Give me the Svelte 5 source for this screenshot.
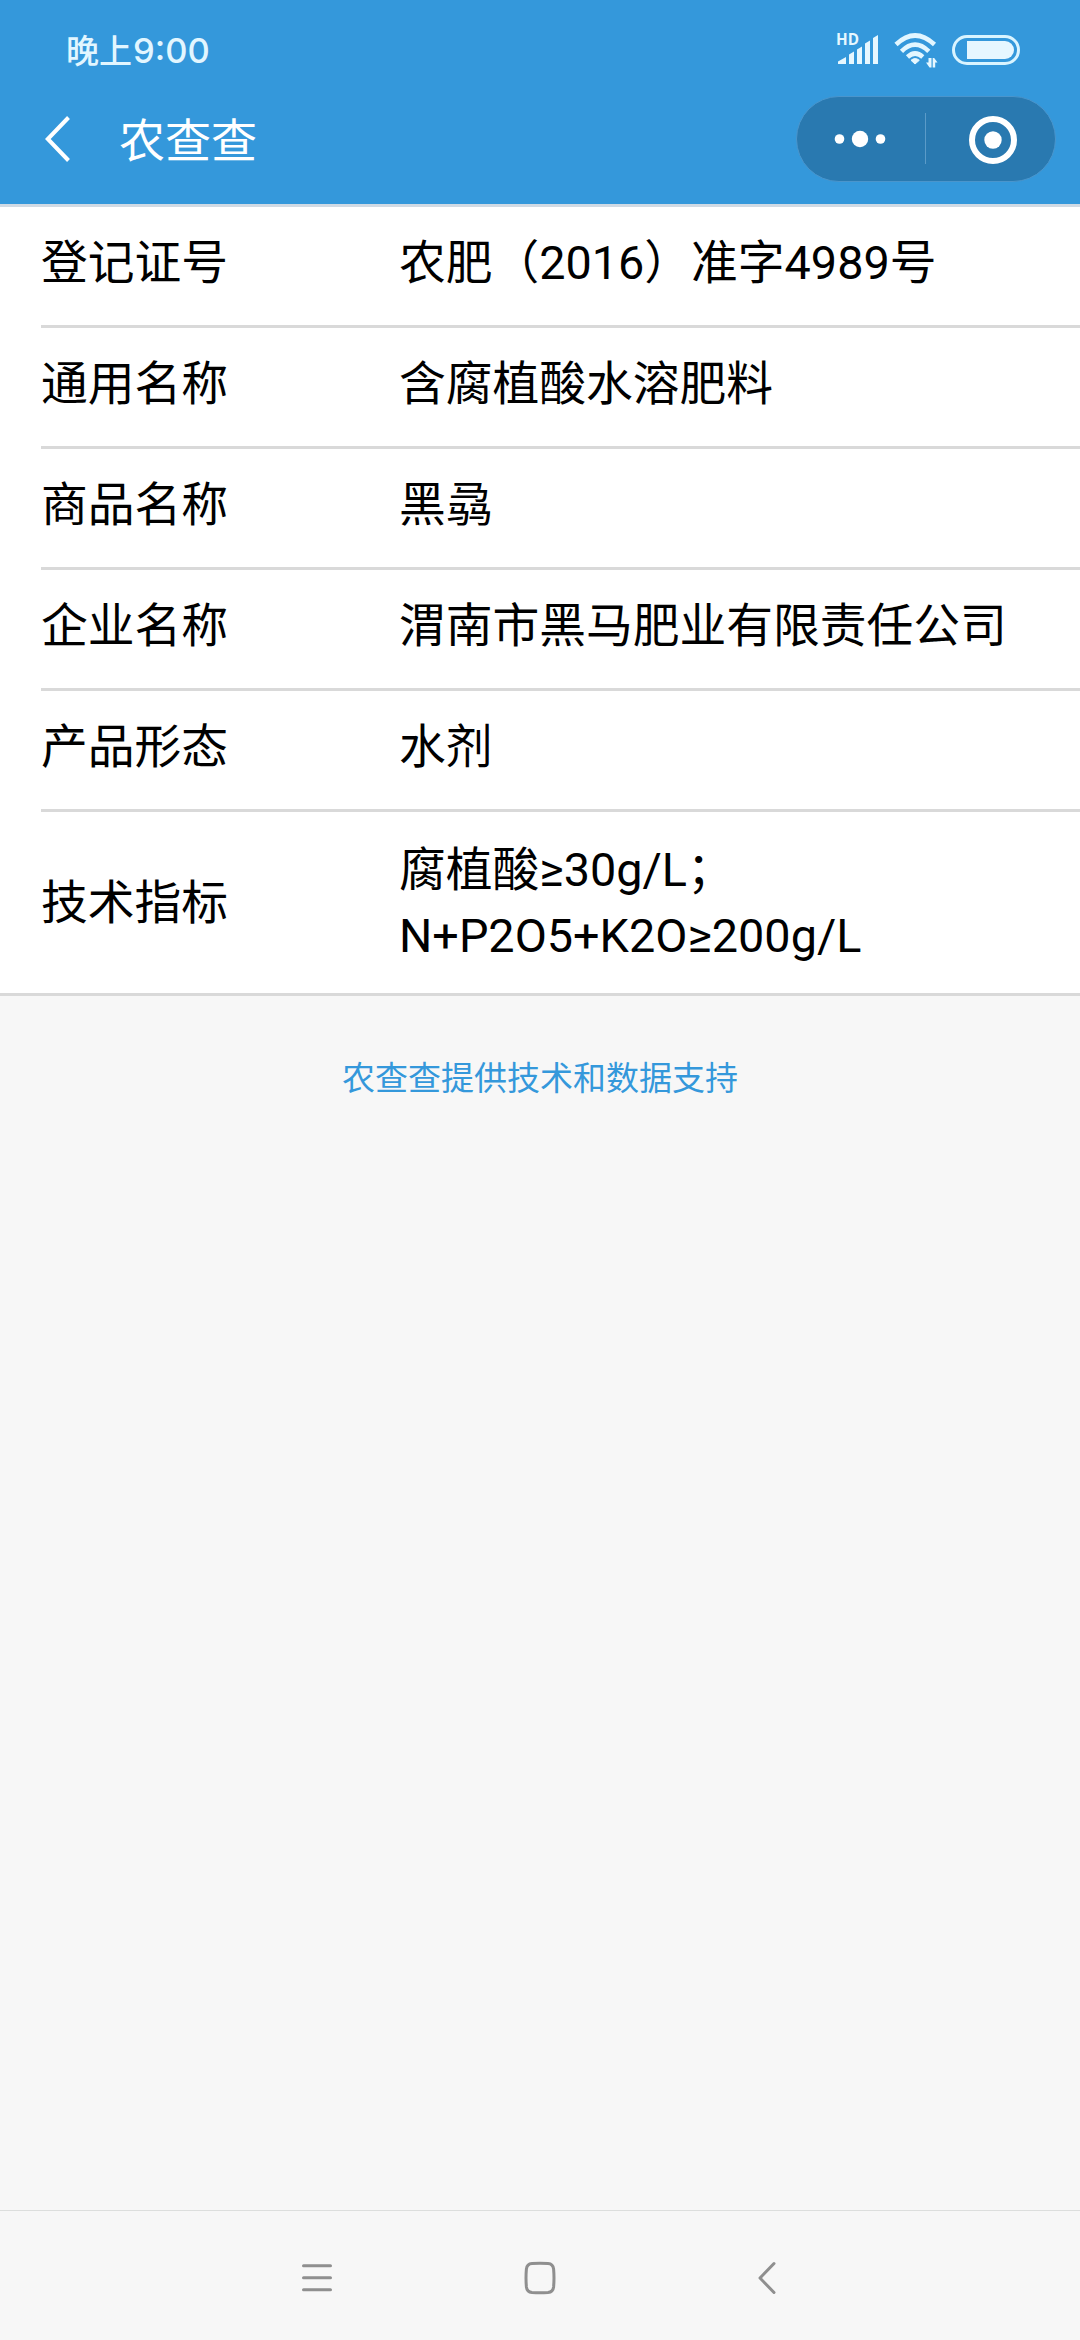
<script>
  const rows = [
    { label: '登记证号', lines: ['农肥（2016）准字4989号'] },
    { label: '通用名称', lines: ['含腐植酸水溶肥料'] },
    { label: '商品名称', lines: ['黑骉'] },
    { label: '企业名称', lines: ['渭南市黑马肥业有限责任公司'] },
    { label: '产品形态', lines: ['水剂'] },
    { label: '技术指标', lines: ['腐植酸≥30g/L；', 'N+P2O5+K2O≥200g/L'] }
  ];
</script>

<div class="screen" lang="zh-CN">
  <header>
    <div class="status">
      <span class="time">晚上<span class="digits">9:00</span></span>
      <div class="indicators">
        <svg class="signal" width="48" height="44" viewBox="-3 -6 48 44">
          <text x="0" y="15" textLength="23" lengthAdjust="spacingAndGlyphs">HD</text>
          <path d="M2 34V31.5L10 27V34ZM13 34V24.5L18 21.5V34ZM21 34V19.5L26 16.5V34ZM29 34V13.5L34 10.5V34ZM37 34V8L42 5V34Z" />
        </svg>
        <svg class="wifi" width="44" height="38" viewBox="0 0 44 38">
          <path class="arc" d="M2 14.500Q21 -3.500 40.500 14.500M7.500 21.300Q21 8 34.800 21.300M13.500 27Q21 20 28.800 27" />
          <path d="M21 34L17 30.300Q21.100 26.800 25.300 30.300Z" stroke="#e6f7ff" stroke-width="1" />
          <path d="M34.500 28H37.500V37.500H35.500L32 32.500H34.500ZM38.700 37.500V28H40.200L43.500 32.600H41.200V37.500Z" />
        </svg>
        <svg class="battery" width="68" height="30" viewBox="0 0 68 30">
          <rect x="1.500" y="1.500" width="65" height="27" rx="13.500" fill="none" stroke="#d9f4ff" stroke-width="3" />
          <path d="M15 6H53A9 9 0 0 1 53 24H15Z" />
        </svg>
      </div>
    </div>
    <div class="titlebar">
      <svg class="back" width="28" height="48" viewBox="0 0 28 48">
        <path d="M25.500 2.500L4.800 24L25.500 45.500" />
      </svg>
      <h1>农查查</h1>
      <div class="capsule">
        <svg width="258" height="84" viewBox="0 0 258 84">
          <circle cx="42.500" cy="42" r="4.800" />
          <circle cx="63" cy="42" r="8.200" />
          <circle cx="83.500" cy="42" r="4.800" />
          <path d="M128.500 16V67" stroke="#5b9bc8" stroke-width="1" />
          <circle cx="196" cy="43" r="21" fill="none" stroke="#fff" stroke-width="6" />
          <circle cx="196" cy="43" r="8.700" />
        </svg>
      </div>
    </div>
  </header>

  <main>
    <section class="cells">
      {#each rows as row}
        <div class="cell">
          <div class="label">{row.label}</div>
          <div class="value">
            {#each row.lines as line}
              <div>{line}</div>
            {/each}
          </div>
        </div>
      {/each}
    </section>
    <p class="support">农查查提供技术和数据支持</p>
  </main>

  <nav>
    <svg width="34" height="36" viewBox="0 0 34 36">
      <path d="M3.500 5.700H30.500M3.500 17.700H30.500M3.500 29.700H30.500" />
    </svg>
    <svg width="34" height="36" viewBox="0 0 34 36">
      <path d="M9 3.500Q17 2.900 25 3.500Q30 3.800 30.600 9Q31.400 18 30.600 27Q30 32 25 32.500Q17 33.100 9 32.500Q4 32 3.400 27Q2.600 18 3.400 9Q4 3.800 9 3.500Z" />
    </svg>
    <svg width="34" height="36" viewBox="0 0 34 36">
      <path d="M28 3.500L14 18L28 32.500" />
    </svg>
  </nav>
</div>

<style>
  :global(body) {
    margin: 0;
    background: #f7f7f7;
  }
  .screen {
    width: 1080px;
    height: 2340px;
    display: flex;
    flex-direction: column;
    background: #f7f7f7;
    color: #000;
    font-family: Roboto, 'Noto Sans CJK SC', sans-serif;
  }
  header {
    height: 204px;
    flex: none;
    background: #3498db;
  }
  svg {
    display: block;
    flex: none;
  }
  .status {
    height: 96px;
    box-sizing: border-box;
    padding: 26px 60px 0 66px;
    display: flex;
    justify-content: space-between;
    align-items: flex-start;
  }
  .time {
    margin-top: -1px;
    font: 500 33px/48px 'Noto Sans CJK SC', sans-serif;
    color: #e2f6ff;
    white-space: nowrap;
  }
  .digits {
    margin-left: 1px;
    font-family: Inter, sans-serif;
    font-size: 34.5px;
  }
  .indicators {
    display: flex;
    align-items: flex-start;
    fill: #e6f7ff;
  }
  .signal {
    margin: -2px 13px 0 0;
  }
  .signal text {
    font: 700 15.5px 'Open Sans', sans-serif;
  }
  .wifi {
    margin: 4px 14px 0 0;
  }
  .arc {
    fill: none;
    stroke: #e2f6ff;
    stroke-width: 4.6;
  }
  .battery {
    margin-top: 9px;
  }
  .titlebar {
    height: 86px;
    box-sizing: border-box;
    padding: 0 24px 0 43px;
    display: flex;
    align-items: center;
  }
  .back path {
    fill: none;
    stroke: #fff;
    stroke-width: 4;
  }
  h1 {
    margin: 0 auto 0 48px;
    padding-top: 4px;
    font-size: 46px;
    line-height: 64px;
    font-weight: 400;
    color: #fff;
  }
  .capsule {
    width: 258px;
    height: 84px;
    border: 1px solid #4a95cc;
    border-radius: 43px;
    background: #2979b0;
    fill: #fff;
  }
  main {
    flex: 1;
  }
  .cells {
    border-top: 3px solid #d0dae4;
    border-bottom: 3px solid #d9d9d9;
    background: #fff;
    padding-left: 41px;
  }
  .cell {
    height: 112px;
    padding-bottom: 6px;
    border-bottom: 3px solid #d9d9d9;
    display: flex;
    align-items: center;
    font-size: 46.75px;
    line-height: 66px;
    white-space: nowrap;
  }
  .cell:last-child {
    height: 181px;
    padding-bottom: 0;
    border-bottom: none;
  }
  .label {
    width: 358px;
  }
  .support {
    margin: 59px 0 0;
    text-align: center;
    font-size: 33px;
    line-height: 48px;
    color: #3498db;
  }
  nav {
    height: 130px;
    box-sizing: border-box;
    flex: none;
    border-top: 1px solid #dcdedd;
    padding: 49px 300px 0;
    display: flex;
    align-items: flex-start;
    justify-content: space-between;
  }
  nav path {
    fill: none;
    stroke: #8f8f8f;
    stroke-width: 3;
    stroke-linecap: round;
    stroke-linejoin: round;
  }
</style>
